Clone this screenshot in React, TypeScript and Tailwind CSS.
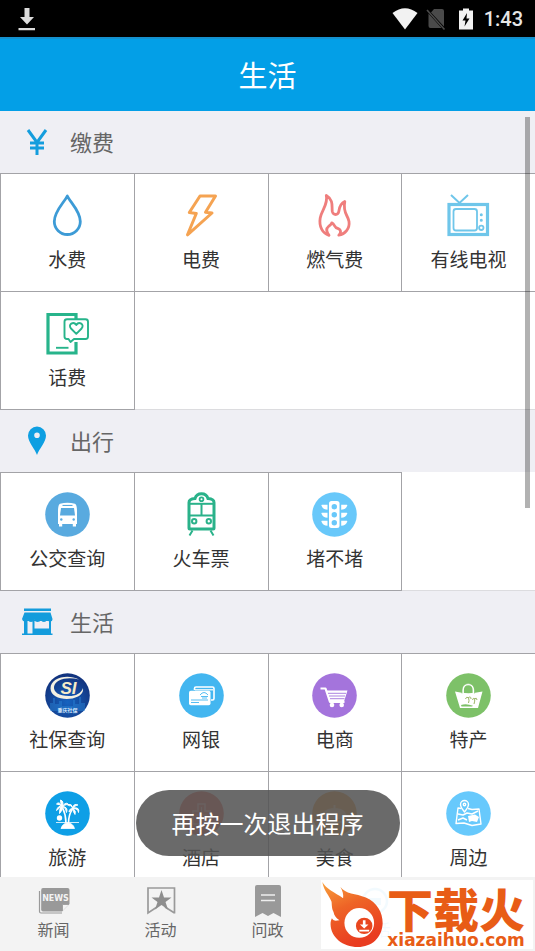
import React, { useState } from 'react';
import clsx from 'clsx';

interface ServiceItem {
    label: string;
    icon: React.ReactNode;
}

interface ServiceGroup {
    title: string;
    icon: React.ReactNode;
    items: ServiceItem[];
}

// 圆形底色图标
function Disc({ fill, children }: { fill: string; children: React.ReactNode }) {
    return (
        <>
            <circle cx="22.5" cy="22.5" r="22.3" fill={fill} />
            {children}
        </>
    );
}

const water = (
    <path d="M22.3 3C19.5 9 9.3 18 9.3 28.5a13 13 0 0 0 26 0C35.3 18 25 9 22.3 3Z" fill="none" stroke="#3d9bd6" strokeWidth="2.8" strokeLinejoin="round" />
);

const power = (
    <path d="M21 3H36.5L26.5 19.2L33 20L8.5 41.8L17.3 20.5L10.3 19.5Z" fill="none" stroke="#f5a352" strokeWidth="3" strokeLinejoin="round" />
);

const gas = (
    <path
        d="M14.3 2.5C16.5 11 9.5 17 8.2 25C6.8 33.5 10.5 40.5 17 42.3C14.5 39 14 35.5 16.5 33.5C18.5 32 19.5 31.5 19.8 29.8C23 31 22 35 26 35.5C29.5 37 29 40 26.8 42.2C33 41.5 38 35.5 37 28.5C36 22 30.5 20 32.8 8.5C27.5 11 27.5 15 26.8 18.5C26 22.5 21.3 22.5 20.3 18.5C19.5 14 22 7 14.3 2.5Z"
        fill="none" stroke="#ef7e7d" strokeWidth="2.8" strokeLinejoin="round"
    />
);

const tv = (
    <g fill="none" stroke="#6fc6ea">
        <path d="M5 2L13.5 10L22 2" strokeWidth="2" />
        <rect x="3" y="11.5" width="38.5" height="30" strokeWidth="3.2" />
        <rect x="7.5" y="16" width="23.5" height="21.5" rx="2.5" strokeWidth="1.8" />
        <circle cx="35.3" cy="21.7" r="0.8" strokeWidth="1.4" />
        <circle cx="35.3" cy="27.3" r="0.8" strokeWidth="1.4" />
        <circle cx="35.3" cy="34.8" r="2.2" strokeWidth="1.8" />
    </g>
);

const phone = (
    <g fill="none" stroke="#27b48b">
        <path d="M31 8V3.5H3V42H31V31" strokeWidth="3.2" />
        <path d="M22 8.3H40.5A2.5 2.5 0 0 1 43 10.8V25.5A2.5 2.5 0 0 1 40.5 28H29L25.5 31L23.5 28H22A2.5 2.5 0 0 1 19.5 25.5V10.8A2.5 2.5 0 0 1 22 8.3Z" strokeWidth="1.9" strokeLinejoin="round" />
        <path d="M31.3 22.8L26 17.5C22.5 13.5 28.5 9.8 31.3 14C34 9.8 40 13.5 36.6 17.5Z" strokeWidth="1.9" strokeLinejoin="round" />
        <path d="M11 36.8H23.5" strokeWidth="1.9" />
    </g>
);

const bus = (
    <Disc fill="#59aadf">
        <path d="M13 19Q13 13 15 11.8Q22.5 9.8 30 11.8Q32 13 32 19V32H31V34.5H27.8V32H17.2V34.5H14V32H13Z" fill="#fff" />
        <path d="M17.5 12.9H27.5V14H17.5Z" fill="#59aadf" />
        <path d="M16 16H29L30 23.5H15Z" fill="#59aadf" />
        <circle cx="16.3" cy="27.5" r="1.2" fill="#59aadf" />
        <circle cx="28.7" cy="27.5" r="1.2" fill="#59aadf" />
    </Disc>
);

const train = (
    <g fill="none" stroke="#2ab28a">
        <path d="M10 36V10.5Q10 7 16 6.5Q17.5 1.8 22.5 1.8Q27.5 1.8 29 6.5Q35 7 35 10.5V36Q35 37 34 37H11Q10 37 10 36Z" strokeWidth="3" />
        <path d="M11 11.8H34" strokeWidth="2" />
        <circle cx="22.5" cy="7.3" r="1.9" strokeWidth="1.8" />
        <path d="M10.5 23.5H35M22.5 12V23" strokeWidth="2" />
        <circle cx="15.2" cy="29.3" r="2.2" strokeWidth="2" />
        <circle cx="29.8" cy="29.3" r="2.2" strokeWidth="2" />
        <path d="M13.5 38.5L10.5 43.5M31.5 38.5L34.5 43.5" strokeWidth="2" />
    </g>
);

const traffic = (
    <Disc fill="#68c8fa">
        <rect x="17" y="9" width="10.5" height="27" rx="2.5" fill="#fff" />
        {[14.7, 22.7, 30.7].map((y) => (
            <g key={y}>
                <circle cx="22.3" cy={y} r="2.7" fill="#68c8fa" />
                <path d={`M15.5 ${y - 2}H10Q9 ${y - 2} 9.5 ${y - 1}Q11 ${y + 3} 15.5 ${y + 3}Z`} fill="#fff" />
                <path d={`M29.2 ${y - 2}H34.7Q35.7 ${y - 2} 35.2 ${y - 1}Q33.7 ${y + 3} 29.2 ${y + 3}Z`} fill="#fff" />
            </g>
        ))}
    </Disc>
);

const social = (
    <>
        <defs>
            <radialGradient id="socialBg" cx="0.5" cy="0.65" r="0.6">
                <stop offset="0" stopColor="#1663c0" />
                <stop offset="1" stopColor="#12347f" />
            </radialGradient>
        </defs>
        <circle cx="22.5" cy="22.5" r="22.3" fill="url(#socialBg)" />
        <path d="M5 30H8V25H10V31H14V28H17V33H28V27H30V31H34V24H36V30H40V38H5Z" fill="#2a86d8" opacity="0.45" />
        <path d="M34 6.5C22 0.5 5.5 5 5.5 15.5C5.5 25 22 29 33 23.5C37 21.5 38.5 18.5 38 15C36 20.5 31 23 24 23C14 23 8.5 19 9 14C10 6.5 22 3.5 34 6.5Z" fill="#f4f1e2" />
        <text x="23.5" y="20.5" textAnchor="middle" fontFamily="Liberation Sans, sans-serif" fontSize="17" fontWeight="700" fontStyle="italic" fill="#f6ecc8">SI</text>
        <text x="22.5" y="38.5" textAnchor="middle" fontFamily="Noto Sans CJK SC, sans-serif" fontSize="5" fontWeight="700" fill="#d7e8fb">重庆社保</text>
    </>
);

const bank = (
    <Disc fill="#43b6f0">
        <path d="M15.5 17V15.5A1.5 1.5 0 0 1 17 14H33.5A1.5 1.5 0 0 1 35 15.5V25.5A1.5 1.5 0 0 1 33.5 27H32" fill="none" stroke="#fff" strokeWidth="1.6" />
        <path d="M16 16.8H34" stroke="#fff" strokeWidth="1.2" />
        <rect x="10" y="17.8" width="21.5" height="14.5" rx="1.8" fill="#fff" />
        <path d="M12 27H29M12 29.5H20" stroke="#43b6f0" strokeWidth="0.9" />
        <path d="M21 22Q25 17 29 22M22 23.5H29M23 25H28" fill="none" stroke="#43b6f0" strokeWidth="0.9" />
    </Disc>
);

const shop = (
    <Disc fill="#a474dc">
        <path d="M8.5 15.5H13.5L18 29H32.5" fill="none" stroke="#fff" strokeWidth="2.2" strokeLinejoin="round" />
        <path d="M14.5 17.5H35.5L32 28.5H18Z" fill="#fff" />
        <path d="M16 20.3H34M17 23H33M18 25.7H32.5" stroke="#a474dc" strokeWidth="0.9" />
        <circle cx="20" cy="32" r="2.3" fill="#fff" />
        <circle cx="29.7" cy="32" r="2.3" fill="#fff" />
    </Disc>
);

const specialty = (
    <Disc fill="#7dc168">
        <path d="M17 22V17C17 9.5 27.5 9.5 27.5 17V22" fill="none" stroke="#fff" strokeWidth="1.8" />
        <path d="M9 18.5Q22 22 36.5 18.5L32 35H14Z" fill="#fff" />
        <path d="M16 20.5V17C16 8.5 28.5 8.5 28.5 17V20.5" fill="none" stroke="#7dc168" strokeWidth="0.6" />
        <path d="M15 32Q20 30 27 32.7L26 33.5H15.5Z" fill="#7dc168" />
        <path d="M22.5 30Q23.5 28 22.5 24.5M19.5 26Q20 23.5 22.5 24.5Q25 23 25 26M28 31Q29 28 28.7 25.5M26.5 27Q27 24.5 28.7 25.5Q31 24.5 31 27" fill="none" stroke="#9bb565" strokeWidth="1" />
    </Disc>
);

const travel = (
    <Disc fill="#0e9fe6">
        <circle cx="14.5" cy="27" r="2.7" fill="#fff" />
        <path d="M11 31.5H34M16 37.5Q18 32 22.5 32Q28 32 29.5 37.5Z" fill="#fff" stroke="#fff" strokeWidth="0.8" />
        <path d="M21 32Q21 24 17.5 16.5M23.5 32Q23.5 24 27.5 18" fill="none" stroke="#fff" strokeWidth="1.6" />
        <path d="M17.5 15.5Q13 14 11.5 19.5Q15 16 17.5 15.5Q14 17 14.5 22.5Q18 19 17.5 15.5Q21.5 17 21.5 21.5Q23.5 16 17.5 15.5Q22 12 24.5 15Q22 9.5 17.5 15Q19 10 15.5 9Q15.5 12 17 15Q14 10 11.5 13Q14 13 17.5 15.5Z" fill="#fff" stroke="#fff" strokeWidth="1" />
        <path d="M28 17.5Q24.5 17 24 21Q26.5 18.5 28 17.5Q28 21 30 23.5Q31.5 20 28 17.5Q33 17.5 33.5 21.5Q35 16 28.5 17Q31 13.5 33 14Q29 12 27.5 16.5Q26.5 12.5 24 13.5Q26 14.5 28 17.5Z" fill="#fff" stroke="#fff" strokeWidth="0.9" />
    </Disc>
);

const hotel = (
    <Disc fill="#ee6a5d">
        <g opacity="0.5">
            <path d="M14 33V20H19V13H26V20H31V33Z" fill="none" stroke="#fff" strokeWidth="1.5" />
            <path d="M22.5 16V31M17 24H28M17 28H28" stroke="#fff" strokeWidth="1.2" />
        </g>
    </Disc>
);

const food = (
    <Disc fill="#f3a245">
        <g opacity="0.5">
            <path d="M10 28Q10 17 22.5 17Q35 17 35 28Z" fill="#fff" />
            <path d="M8 31H37M22.5 17V14" stroke="#fff" strokeWidth="2" />
        </g>
    </Disc>
);

const nearby = (
    <Disc fill="#67c9fc">
        <g fill="none" stroke="#fff" strokeWidth="1.4" strokeLinejoin="round">
            <path d="M15.5 17.5L12 17L10 32.5L18 32L26 34.5L35 33L33 18L26 18.5L22 17.5" />
            <path d="M18.5 21Q14.5 16 14.5 13.5A4 4 0 0 1 22.5 13.5Q22.5 16 18.5 21Z" />
            <circle cx="18.5" cy="13.5" r="1.2" />
            <path d="M12 23L17 24L21 22L26 23L32 20M12 29L17 27L21 29" />
        </g>
        <path d="M22 25L29 23.5L33 26L31 31L26 30L23 31Z" fill="#fff" />
    </Disc>
);

const groups: ServiceGroup[] = [
    {
        title: '缴费',
        icon: <path d="M8 5L17 17.5L26 5M17 17V30M10 18H24M10 23H24" fill="none" stroke="#149ddd" strokeWidth="3" />,
        items: [
            { label: '水费', icon: water },
            { label: '电费', icon: power },
            { label: '燃气费', icon: gas },
            { label: '有线电视', icon: tv },
            { label: '话费', icon: phone },
        ],
    },
    {
        title: '出行',
        icon: <path fillRule="evenodd" d="M17 31C15 25 8 18 8 11.5A9 9 0 0 1 26 11.5C26 18 19 25 17 31ZM17 8.5A2.8 2.8 0 1 0 17 14.1A2.8 2.8 0 1 0 17 8.5Z" fill="#0e9fe2" />,
        items: [
            { label: '公交查询', icon: bus },
            { label: '火车票', icon: train },
            { label: '堵不堵', icon: traffic },
        ],
    },
    {
        title: '生活',
        icon: (
            <g fill="#149cdc">
                <path d="M4 3.5H31V6H4ZM4.5 7.5H30.5L32.5 14Q32.5 16.5 30 16.5Q27.5 16.5 27 14.8Q26 17 24 17Q21.5 17 21 14.8Q20 17 17.5 17Q15 17 14.5 14.8Q13.5 17 11 17Q8.5 17 8 14.8Q7 16.5 5 16.5Q2.5 16.5 2 14Z" />
                <path fillRule="evenodd" d="M4 15H31V28.5H32.5V30H2V28.5H4ZM7.5 16V28.5H12.5V16ZM14.5 16V23.5H29V16Z" />
            </g>
        ),
        items: [
            { label: '社保查询', icon: social },
            { label: '网银', icon: bank },
            { label: '电商', icon: shop },
            { label: '特产', icon: specialty },
            { label: '旅游', icon: travel },
            { label: '酒店', icon: hotel },
            { label: '美食', icon: food },
            { label: '周边', icon: nearby },
        ],
    },
];

const tabs: ServiceItem[] = [
    {
        label: '新闻',
        icon: (
            <>
                <path d="M1.5 6V26.5Q1.5 28 3 28H24" fill="none" stroke="#9a9a9a" strokeWidth="1.2" />
                <path d="M5 3H29.5Q31.5 3 31.5 5V19L24 26.5H5Q3.2 26.5 3.2 24.5V5Q3.2 3 5 3Z" fill="#999" />
                <path d="M24.5 26V19.5H31" fill="#f3f3f3" stroke="#999" strokeWidth="0.8" />
                <text x="17.5" y="15.5" textAnchor="middle" fontFamily="DejaVu Sans, sans-serif" fontSize="8" fontWeight="700" fill="#f3f3f3">NEWS</text>
            </>
        ),
    },
    {
        label: '活动',
        icon: (
            <>
                <path d="M29.5 28.5V3H3V28L12 22M20 22L29.5 28" fill="none" stroke="#9a9a9a" strokeWidth="1.7" />
                <path d="M16.5 5L19 12.5H26.5L20.5 17L23 24.5L16.5 20L10 24.5L12.5 17L6.5 12.5H14Z" fill="#8e8e8e" />
            </>
        ),
    },
    {
        label: '问政',
        icon: (
            <>
                <path d="M5 0H27Q29 0 29 2V32L21.5 28L16 31L10.5 28L3 32V2Q3 0 5 0Z" fill="#999" />
                <path d="M9 10H23M9 15.5H23" stroke="#eee" strokeWidth="1.5" />
            </>
        ),
    },
    {
        label: '生活',
        icon: (
            <>
                <circle cx="16" cy="16" r="12" fill="none" stroke="#0e9fe6" strokeWidth="2.5" />
                <path d="M10 13V20H22V13Z" fill="#0e9fe6" />
            </>
        ),
    },
];

function StatusBar() {
    return (
        <div className="flex h-[37px] shrink-0 items-center bg-black pr-3 pl-4">
            <svg className="h-6 w-5" viewBox="0 0 20 24" fill="#dcdcdc">
                <path d="M8.5 1H13.5V10H18L11 17.5L4 10H8.5ZM2.5 21H19V23.3H2.5Z" />
            </svg>
            <div className="ml-auto flex items-center">
                <svg className="h-6 w-[26px]" viewBox="0 0 26 24" fill="#f2f2f2">
                    <path d="M0.5 6Q13 -3.5 25.5 6L13 22.5Z" />
                </svg>
                <svg className="ml-2 h-6 w-5" viewBox="0 0 20 24">
                    <path d="M8 2H16Q18 2 18 4V19.5L5 5.5ZM2.5 6.5L15.5 21H4.5Q2.5 21 2.5 19Z" fill="#4a4a4a" />
                    <path d="M1 3L18.5 22.5" stroke="#4a4a4a" strokeWidth="1.6" />
                </svg>
                <svg className="ml-3 h-6 w-4" viewBox="0 0 16 24">
                    <path d="M5 1.5H11V3.5H15V22.5H1V3.5H5Z" fill="#f2f2f2" />
                    <path d="M9 6L4.5 13.5H7.5L6.5 19.5L11.5 11.5H8.5Z" fill="#000" />
                </svg>
                <span className="ml-2.5 font-['Roboto',sans-serif] text-[20px] leading-6 font-medium text-[#e6e6e6]">1:43</span>
            </div>
        </div>
    );
}

function ServiceSection({ group }: { group: ServiceGroup }) {
    return (
        <section>
            <div className="flex h-[62px] items-center gap-4 bg-[#efeff4] px-5">
                <svg className="h-[34px] w-[34px]" viewBox="0 0 34 34">{group.icon}</svg>
                <h2 className="pb-0.5 text-[22px] leading-8 text-[#666]">{group.title}</h2>
            </div>
            {/* 相邻格子的边框用 -1px 外边距合并 */}
            <div className="grid grid-cols-4 border-b border-[#dcdcdf]">
                {group.items.map((item) => (
                    <button
                        key={item.label}
                        type="button"
                        className="-mr-px -mb-px flex h-[119px] flex-col items-center gap-2 border border-[#a3a3a7] pt-[19px] text-[19px] leading-[26px] text-[#333]"
                    >
                        <svg className="h-[45px] w-[45px]" viewBox="0 0 45 45">{item.icon}</svg>
                        {item.label}
                    </button>
                ))}
            </div>
        </section>
    );
}

function Watermark() {
    return (
        <div className="absolute right-0.5 bottom-0.5 flex h-[69px] gap-1 bg-white/95 pr-2">
            <svg className="h-[69px] w-[62px] shrink-0" viewBox="20 30 188 207">
                <defs>
                    <linearGradient id="flame" x1="0" y1="0" x2="0.4" y2="1">
                        <stop offset="0" stopColor="#f9a13c" />
                        <stop offset="0.45" stopColor="#ee6427" />
                        <stop offset="1" stopColor="#e93c20" />
                    </linearGradient>
                </defs>
                <path
                    d="M24 35C34 55 62 67 87 84C89 72 85 62 79 50C94 72 125 69 156 82C190 97 207 127 207 160C205 205 173 232 132 232C85 232 50 202 49 163C49 155 51 150 53 145C60 155 65 152 76 151C65 145 60 136 58 126C52 115 53 102 52 95C44 73 29 63 24 35Z"
                    fill="url(#flame)"
                />
                <circle cx="136" cy="159" r="45" fill="#fff" />
                <circle cx="151" cy="168" r="25" fill="#e9471f" />
                <path d="M147 151H155V164H164L151 176L138 164H147ZM136 180H166V185H136Z" fill="#fff" />
            </svg>
            <div className="flex flex-col items-center justify-end text-[#e85c16]">
                <span className="text-[46px] leading-[48px] font-black">下载火</span>
                <span className="font-['DejaVu_Sans',sans-serif] text-[17px] leading-[18px] font-bold">xiazaihuo.com</span>
            </div>
        </div>
    );
}

export default function App() {
    const [active, setActive] = useState('生活');

    return (
        <div className="relative flex h-screen flex-col overflow-hidden bg-white font-['Noto_Sans_CJK_SC',sans-serif]">
            <StatusBar />
            <header className="flex h-[74px] shrink-0 items-center justify-center border-t-2 border-[#1590cd] bg-[#039fe7] pb-0.5">
                <h1 className="text-[29px] leading-10 text-white">生活</h1>
            </header>

            <div className="relative min-h-0 flex-1">
                <main className="h-full overflow-x-hidden overflow-y-auto [scrollbar-width:none]">
                    {groups.map((group) => (
                        <ServiceSection key={group.title} group={group} />
                    ))}
                </main>
                <div className="absolute top-1.5 right-[5px] h-[51%] w-[5px] bg-black/30" />
            </div>

            <nav className="grid h-[74px] shrink-0 grid-cols-5 bg-[#f3f3f3]">
                {tabs.map((tab) => (
                    <button
                        key={tab.label}
                        type="button"
                        onClick={() => setActive(tab.label)}
                        className={clsx(
                            'flex flex-col items-center gap-0.5 pt-2 text-[16px] leading-5',
                            active === tab.label ? 'text-[#0e9fe6]' : 'text-[#666]'
                        )}
                    >
                        <svg className="h-8 w-8" viewBox="0 0 32 32">{tab.icon}</svg>
                        {tab.label}
                    </button>
                ))}
            </nav>

            <div role="status" className="absolute bottom-[95px] left-1/2 flex h-[66px] -translate-x-1/2 items-center rounded-full bg-[#545454]/87 px-9 text-[24px] whitespace-nowrap text-white">
                再按一次退出程序
            </div>
            <Watermark />
        </div>
    );
}
